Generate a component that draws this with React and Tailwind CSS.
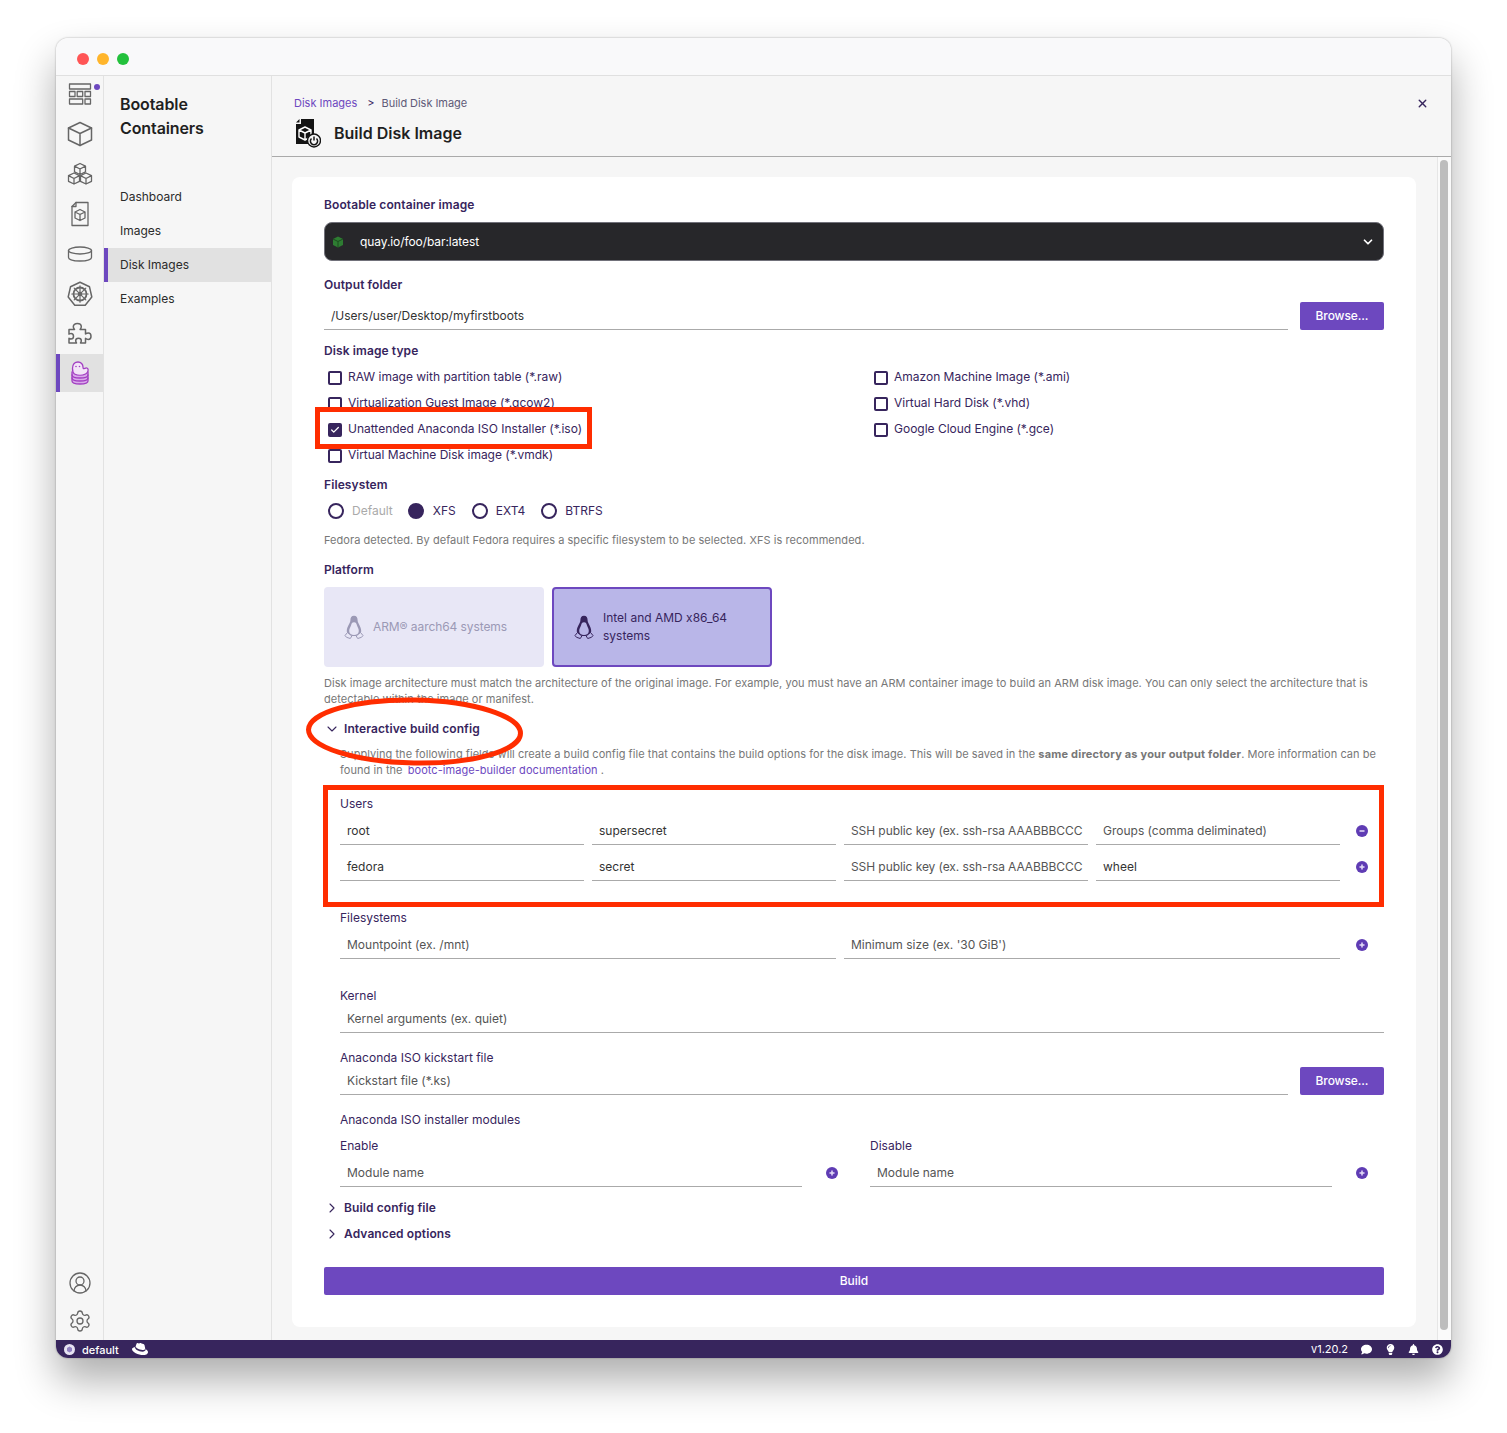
import { ChevronDown, ChevronRight, Settings, CircleUserRound, X, Check } from "lucide-react";
import { FaRedhat, FaComment, FaLightbulb, FaBell, FaQuestionCircle } from "react-icons/fa";

const NAV_STROKE = { fill: "none", stroke: "#666", strokeWidth: 1.3, strokeLinejoin: "round", strokeLinecap: "round" };

function DashboardIcon() {
  return (
    <svg width="24" height="24" viewBox="0 0 24 24" {...NAV_STROKE}>
      <rect x="1.5" y="1" width="21" height="5" />
      <rect x="1.5" y="8.5" width="5.5" height="5" />
      <rect x="9.2" y="8.5" width="5.5" height="5" />
      <rect x="17" y="8.5" width="5.5" height="5" />
      <rect x="1.5" y="16" width="13.2" height="5" />
      <rect x="17" y="16" width="5.5" height="5" />
    </svg>
  );
}

function CubeIcon() {
  return (
    <svg width="26" height="26" viewBox="0 0 26 26" {...NAV_STROKE} strokeWidth="1.5">
      <path d="M13 1.500 24.500 7v12L13 24.500 1.500 19V7z" />
      <path d="M1.500 7 13 12.500 24.500 7M13 12.500v12" />
    </svg>
  );
}

function CubesIcon() {
  const cube = "M0-5.500 5.500-2.800v5.600L0 5.500-5.500 2.800v-5.600zM-5.500-2.800 0 0 5.500-2.800M0 0v5.500";
  return (
    <svg width="26" height="24" viewBox="0 0 26 24" {...NAV_STROKE}>
      <path d={cube} transform="translate(13 7)" />
      <path d={cube} transform="translate(7 16.5)" />
      <path d={cube} transform="translate(19 16.5)" />
    </svg>
  );
}

function FileCubeIcon() {
  return (
    <svg width="20" height="26" viewBox="0 0 20 26" {...NAV_STROKE}>
      <path d="M6 1.500h12v23H2V5.500z" />
      <path d="M2 5.500h4v-4" />
      <path d="M10 8.500 15 11v6l-5 2.500L5 17v-6zM5 11l5 2.500 5-2.500M10 13.500v6" />
    </svg>
  );
}

function DiskIcon() {
  return (
    <svg width="26" height="16" viewBox="0 0 26 16" {...NAV_STROKE}>
      <ellipse cx="13" cy="4.500" rx="11.500" ry="3.500" />
      <path d="M1.500 4.500v7c0 2 5 3.500 11.500 3.500s11.500-1.500 11.500-3.500v-7" />
    </svg>
  );
}

function KubeIcon() {
  return (
    <svg width="26" height="26" viewBox="0 0 26 26" {...NAV_STROKE}>
      <path d="M13 1.200 22.500 5.800 24.800 16 18.200 24.200H7.800L1.200 16 3.500 5.800z" strokeWidth="1.500" />
      <circle cx="13" cy="13" r="6.500" strokeWidth="1.800" />
      <circle cx="13" cy="13" r="1.600" fill="#666" />
      <path d="M13 4.800v16.400M4.800 13h16.400M7.200 7.200l11.600 11.600M18.800 7.200 7.200 18.800" strokeWidth="1.200" />
    </svg>
  );
}

function PuzzleIcon() {
  return (
    <svg width="26" height="26" viewBox="0 0 26 26" {...NAV_STROKE} strokeWidth="1.500">
      <path d="M2 8.500h5.500c-.8-1-1.200-1.800-1.200-2.800 0-2 1.800-3.200 4-3.200s4 1.200 4 3.200c0 1-.4 1.800-1.200 2.800h5.400v4.500c1-.7 1.800-1 2.800-1 1.700 0 2.700 1.400 2.700 3.200s-1 3.200-2.700 3.200c-1 0-1.800-.3-2.800-1v4.600h-5c.5-1 .8-1.500.8-2.300 0-1.500-1.200-2.500-2.800-2.500s-2.800 1-2.800 2.500c0 .8.300 1.300.8 2.300H2v-4.700c1 .5 1.300.7 2 .7 1.500 0 2.500-1.200 2.500-2.800s-1-2.800-2.500-2.800c-.7 0-1 .2-2 .7z" />
    </svg>
  );
}

function BootcIcon() {
  return (
    <svg width="20" height="24" viewBox="0 0 20 24" fill="none" stroke="#a23fc2" strokeWidth="1.300" strokeLinejoin="round" strokeLinecap="round">
      <path d="M2 11v9c0 1.800 3.500 3 8 3s8-1.200 8-3v-9" fill="#d9a8ea" />
      <path d="M2 14c0 1.800 3.500 3 8 3s8-1.200 8-3M2 17c0 1.800 3.500 3 8 3s8-1.200 8-3" />
      <path d="M2.500 7.500C2.500 3 5 1 8 1s5 2.500 5 5c0 1.500.5 2 1.500 1.500S17 6 18 8c.5 1.500-.5 4-2.500 5-3 1.500-8 1.500-11 0-1.500-1-2-3-2-5.500z" fill="#f3e4f8" />
      <circle cx="6" cy="5.500" r=".8" fill="#a23fc2" stroke="none" />
      <circle cx="9.500" cy="5.500" r=".8" fill="#a23fc2" stroke="none" />
    </svg>
  );
}

function NavIcon({ children, dot, active, first }) {
  return (
    <div className={`relative flex items-center justify-center ${first ? "h-[38px]" : "h-10"} ${active ? "bg-[#e1e1e1] border-l-4 border-[#6d48bf] pr-1 !h-[38px]" : ""}`}>
      {children}
      {dot && <span className="absolute right-[3px] top-[8px] h-[6px] w-[6px] rounded-full bg-[#6d48bf]" />}
    </div>
  );
}

function Label({ children, className = "" }) {
  return <div className={`h-4 text-xs leading-4 font-semibold tracking-[0.1px] text-[#37255d] ${className}`}>{children}</div>;
}

function SubLabel({ children, className = "" }) {
  return <div className={`h-4 text-xs leading-4 text-[#37255d] ${className}`}>{children}</div>;
}

function Input({ value, placeholder, className = "" }) {
  return (
    <div className={`flex h-7 items-center border-b border-[#aaa] px-[7px] text-xs whitespace-nowrap overflow-hidden ${placeholder ? "text-[#555]" : "text-[#333]"} ${className}`}>
      {value || placeholder}
    </div>
  );
}

function Browse() {
  return (
    <button className="h-7 w-[84px] shrink-0 rounded-[2px] bg-[#6d48bf] text-xs font-medium tracking-[-0.1px] text-white">Browse...</button>
  );
}

function RoundButton({ minus }) {
  return (
    <svg width="12" height="12" viewBox="0 0 12 12">
      <circle cx="6" cy="6" r="6" fill="#5f3cb4" />
      <path d={minus ? "M3.500 6h5" : "M3.500 6h5M6 3.500v5"} stroke="#e6def8" strokeWidth="1.500" />
    </svg>
  );
}

function RowAction({ minus, className = "w-11" }) {
  return (
    <div className={`flex h-7 shrink-0 items-center justify-end pr-4 ${className}`}>
      <RoundButton minus={minus} />
    </div>
  );
}

function CheckRow({ label, checked }) {
  return (
    <div className="flex h-[26px] items-center gap-[6px] pl-1 text-xs tracking-[-0.01px] text-[#37255d]">
      <span className={`flex h-[14px] w-[14px] shrink-0 translate-y-px items-center justify-center rounded-[2px] border-2 border-[#37255d] ${checked ? "bg-[#37255d]" : "bg-white"}`}>
        {checked && <Check size={10} strokeWidth={3} className="text-white" />}
      </span>
      {label}
    </div>
  );
}

function Radio({ label, checked, muted, className = "gap-2" }) {
  return (
    <div className={`flex items-center text-xs ${muted ? "text-[#aaa]" : "text-[#37255d]"} ${className}`}>
      <span className={`h-4 w-4 rounded-full border-2 border-[#37255d] ${checked ? "bg-[#37255d]" : "bg-white"}`} />
      {label}
    </div>
  );
}

function Penguin({ color, bg }) {
  return (
    <svg width="20" height="24" viewBox="0 0 20 24" strokeLinejoin="round">
      <path d="M10 .8c-2.600 0-3.600 2-3.600 4.500 0 3-3.600 6.200-3.600 10.700 0 3 2.700 5 7.200 5s7.200-2 7.200-5c0-4.500-3.600-7.700-3.600-10.700C13.600 2.800 12.600.8 10 .8z" fill={color} />
      <path d="M10 7.200c-2 0-2.300 1.200-3 3.200-.8 2-1.800 3.500-1.800 5.600 0 2.500 2 4 4.800 4s4.800-1.500 4.800-4c0-2.100-1-3.600-1.800-5.600-.7-2-1-3.200-3-3.200z" fill={bg} />
      <path d="M3.500 17.500 1 20.500l1.500 1.800 3.800 1.200 1.500-2.500zM16.500 17.500l2.500 3-1.500 1.800-3.800 1.200-1.500-2.500z" fill={bg} stroke={color} strokeWidth="1" />
    </svg>
  );
}

function PlatformCard({ label, selected }) {
  return (
    <div className={`flex h-20 w-[220px] items-center gap-[8px] rounded-[4px] px-[20px] text-xs leading-[18px] ${selected ? "border-2 border-[#6d48bf] bg-[#b9b6e8] text-[#37255d]" : "bg-[#e8e7f6] tracking-[-0.08px] text-[#9b99b5]"}`}>
      <div className="shrink-0">
        <Penguin color={selected ? "#37255d" : "#9b99b5"} bg={selected ? "#b9b6e8" : "#e8e7f6"} />
      </div>
      <div className="pl-px">{label}</div>
    </div>
  );
}

function Section({ label, open }) {
  return (
    <div className="flex h-4 items-center gap-1 text-xs font-semibold tracking-[0.1px] text-[#37255d]">
      {open ? <ChevronDown size={16} strokeWidth={1.6} /> : <ChevronRight size={16} strokeWidth={1.6} />}
      {label}
    </div>
  );
}

const HELP = "text-[11px] leading-4 tracking-[0.05px] text-[#777]";

const checksLeft = [
  "RAW image with partition table (*.raw)",
  "Virtualization Guest Image (*.qcow2)",
  "Unattended Anaconda ISO Installer (*.iso)",
  "Virtual Machine Disk image (*.vmdk)"
];
const checksRight = ["Amazon Machine Image (*.ami)", "Virtual Hard Disk (*.vhd)", "Google Cloud Engine (*.gce)"];

export default function App() {
  return (
    <div className="relative h-[1433px] w-[1507px] overflow-hidden bg-white pl-[56px] pt-[38px] font-['Inter',sans-serif]">
      <div className="flex h-[1320px] w-[1395px] flex-col overflow-hidden rounded-xl bg-[#f6f6f6] shadow-[0_0_2px_rgba(0,0,0,0.35),0_22px_40px_rgba(0,0,0,0.32)]">
        {/* title bar */}
        <div className="flex h-[38px] shrink-0 items-center gap-2 border-b border-[#e0e0e0] bg-[#f9f9fa] pl-[21px] pt-1">
          <span className="h-3 w-3 rounded-full bg-[#ff5555]" />
          <span className="h-3 w-3 rounded-full bg-[#ffb52b]" />
          <span className="h-3 w-3 rounded-full bg-[#23c13c]" />
        </div>

        <div className="flex min-h-0 flex-1">
          {/* icon rail */}
          <div className="flex w-[48px] shrink-0 flex-col border-r border-[#e2e2e2] bg-[#f6f6f6]">
            <NavIcon dot first><DashboardIcon /></NavIcon>
            <NavIcon><CubeIcon /></NavIcon>
            <NavIcon><CubesIcon /></NavIcon>
            <NavIcon><FileCubeIcon /></NavIcon>
            <NavIcon><DiskIcon /></NavIcon>
            <NavIcon><KubeIcon /></NavIcon>
            <NavIcon><PuzzleIcon /></NavIcon>
            <NavIcon active><BootcIcon /></NavIcon>
            <div className="mt-auto flex flex-col items-center gap-[14px] pb-[7px] text-[#666]">
              <CircleUserRound size={24} strokeWidth={1.3} />
              <Settings size={24} strokeWidth={1.3} />
            </div>
          </div>

          {/* section nav */}
          <div className="w-[168px] shrink-0 border-r border-[#e2e2e2] bg-[#f6f6f6]">
            <div className="pl-4 pt-4 text-base leading-6 font-semibold tracking-[-0.1px] text-[#1f1f1f]">Bootable<br />Containers</div>
            <div className="mt-10 text-xs text-[#2b2b2b]">
              <div className="flex h-[34px] items-center pl-4">Dashboard</div>
              <div className="flex h-[34px] items-center pl-4">Images</div>
              <div className="flex h-[34px] items-center border-l-4 border-[#6d48bf] bg-[#e1e1e1] pl-3">Disk Images</div>
              <div className="flex h-[34px] items-center pl-4">Examples</div>
            </div>
          </div>

          {/* main */}
          <div className="flex min-w-0 flex-1 flex-col">
            <div className="relative h-[81px] shrink-0 border-b border-[#aaa] pl-[22px]">
              <div className="flex items-center pt-[20px] text-[11px] leading-[14px]">
                <span className="text-[#6d48bf]">Disk Images</span>
                <span className="ml-[10px] text-[#37255d]">&gt;</span>
                <span className="ml-[7px] tracking-[-0.05px] text-[#5e5a78]">Build Disk Image</span>
              </div>
              <div className="mt-2 flex items-center gap-[13px] pl-px">
                <svg width="26" height="30" viewBox="0 0 26 30">
                  <path d="M6 1h13v25H1V6h5z" fill="#141414" />
                  <path d="M1 4.500 4.500 1v3.500z" fill="#141414" />
                  <path d="M10 9 16 12v7l-6 3-6-3v-7zM4 12l6 3 6-3M10 15v7" fill="none" stroke="#fff" strokeWidth="1.400" strokeLinejoin="round" />
                  <circle cx="19" cy="22.500" r="6.500" fill="#f6f6f6" stroke="#141414" strokeWidth="1.400" />
                  <path d="M19 18.500v4M16.500 20.500a3.600 3.600 0 1 0 5 0" fill="none" stroke="#141414" strokeWidth="1.500" />
                </svg>
                <span className="text-base leading-6 font-semibold text-[#1f1f1f]">Build Disk Image</span>
              </div>
              <X size={13} strokeWidth={2.5} className="absolute right-[22px] top-[21px] text-[#37255d]" />
            </div>

            <div className="flex min-h-0 flex-1">
              <div className="min-w-0 flex-1 pl-5 pr-[21px] pt-5">
                {/* form card */}
                <div className="h-[1150px] rounded-lg bg-white px-8 pt-5">
                  <Label>Bootable container image</Label>
                  <div className="mt-[9px] flex h-[39px] items-center rounded-lg border border-[#71717a] bg-[#27272a] pl-[7px] pr-2 text-xs tracking-[-0.08px] text-white">
                    <svg width="12" height="12" viewBox="0 0 12 12" className="shrink-0">
                      <path d="M6 .5 11 3v6L6 11.500 1 9V3z" fill="#2e7d32" />
                      <path d="M1 3l5 2.500L11 3M6 5.500v6" fill="none" stroke="#1c4d1f" strokeWidth="1" />
                    </svg>
                    <span className="ml-4">quay.io/foo/bar:latest</span>
                    <ChevronDown size={14} strokeWidth={3} className="ml-auto" />
                  </div>

                  <Label className="mt-4">Output folder</Label>
                  <div className="mt-[9px] flex gap-3">
                    <Input value="/Users/user/Desktop/myfirstboots" className="flex-1" />
                    <Browse />
                  </div>

                  <Label className="mt-[13px]">Disk image type</Label>
                  <div className="mt-[5px] flex">
                    <div className="w-[546px]">
                      {checksLeft.map((c, i) => (
                        <CheckRow key={c} label={c} checked={i === 2} />
                      ))}
                    </div>
                    <div>
                      {checksRight.map((c) => (
                        <CheckRow key={c} label={c} />
                      ))}
                    </div>
                  </div>

                  <Label className="mt-[9px]">Filesystem</Label>
                  <div className="mt-[5px] flex h-[26px] items-center gap-4 pl-1">
                    <Radio label="Default" muted />
                    <Radio label="XFS" checked className="-ml-px gap-[9px]" />
                    <Radio label="EXT4" />
                    <Radio label="BTRFS" />
                  </div>
                  <div className={`mt-2 ${HELP}`}>
                    Fedora detected. By default Fedora requires a specific filesystem to be selected. XFS is recommended.
                  </div>

                  <Label className="mt-[14px]">Platform</Label>
                  <div className="mt-[9px] flex gap-2">
                    <PlatformCard label="ARM® aarch64 systems" />
                    <PlatformCard label={<>Intel and AMD x86_64<br />systems</>} selected />
                  </div>
                  <div className={`mt-2 ${HELP}`}>
                    Disk image architecture must match the architecture of the original image. For example, you must have an ARM container image to build an ARM disk image. You can only select the architecture that is detectable within the image or manifest.
                  </div>

                  <div className="mt-[14px]"><Section label="Interactive build config" open /></div>

                  <div className="pl-4">
                    <div className={`mt-[9px] ${HELP}`}>
                      Supplying the following fields will create a build config file that contains the build options for the disk image. This will be saved in the <span className="font-bold tracking-[0.2px]">same directory as your output folder</span>. More information can be found in the <span className="ml-[2px] text-[#6d48bf]">bootc-image-builder documentation</span> .
                    </div>

                    <SubLabel className="mt-[18px]">Users</SubLabel>
                    <div className="mt-[5px] flex flex-col gap-2">
                      <div className="flex gap-2">
                        <Input value="root" className="w-[244px]" />
                        <Input value="supersecret" className="w-[244px]" />
                        <Input placeholder="SSH public key (ex. ssh-rsa AAABBBCCC" className="w-[244px] tracking-[-0.08px]" />
                        <Input placeholder="Groups (comma deliminated)" className="w-[244px]" />
                        <RowAction minus className="-ml-2 w-[44px]" />
                      </div>
                      <div className="flex gap-2">
                        <Input value="fedora" className="w-[244px]" />
                        <Input value="secret" className="w-[244px]" />
                        <Input placeholder="SSH public key (ex. ssh-rsa AAABBBCCC" className="w-[244px] tracking-[-0.08px]" />
                        <Input value="wheel" className="w-[244px]" />
                        <RowAction className="-ml-2 w-[44px]" />
                      </div>
                    </div>

                    <SubLabel className="mt-[29px]">Filesystems</SubLabel>
                    <div className="mt-[5px] flex gap-2">
                      <Input placeholder="Mountpoint (ex. /mnt)" className="w-[496px]" />
                      <Input placeholder="Minimum size (ex. '30 GiB')" className="w-[496px]" />
                      <RowAction className="-ml-2 w-[44px]" />
                    </div>

                    <SubLabel className="mt-[29px]">Kernel</SubLabel>
                    <Input placeholder="Kernel arguments (ex. quiet)" className="mt-px" />

                    <SubLabel className="mt-[17px]">Anaconda ISO kickstart file</SubLabel>
                    <div className="mt-px flex gap-3">
                      <Input placeholder="Kickstart file (*.ks)" className="flex-1" />
                      <Browse />
                    </div>

                    <SubLabel className="mt-[17px]">Anaconda ISO installer modules</SubLabel>
                    <div className="mt-[10px] grid grid-cols-2 gap-4">
                      <div>
                        <SubLabel>Enable</SubLabel>
                        <div className="mt-[5px] flex">
                          <Input placeholder="Module name" className="flex-1" />
                          <RowAction className="w-[52px]" />
                        </div>
                      </div>
                      <div>
                        <SubLabel>Disable</SubLabel>
                        <div className="mt-[5px] flex">
                          <Input placeholder="Module name" className="flex-1" />
                          <RowAction className="w-[52px]" />
                        </div>
                      </div>
                    </div>
                  </div>

                  <div className="mt-[13px]"><Section label="Build config file" /></div>
                  <div className="mt-[10px]"><Section label="Advanced options" /></div>

                  <button className="mt-[25px] h-7 w-full rounded-[2px] bg-[#6d48bf] text-xs font-medium text-white">Build</button>
                </div>
              </div>

              {/* scrollbar */}
              <div className="w-[14px] shrink-0 border-l border-[#e6e6e6] bg-[#fafafa] pl-[2px] pt-[3px]">
                <div className="h-[1170px] w-2 rounded-full bg-[#bdbdbd]" />
              </div>
            </div>
          </div>
        </div>

        {/* status bar */}
        <div className="flex h-[18px] shrink-0 items-center bg-[#37255d] text-[11px] text-white">
          <svg width="11" height="11" viewBox="0 0 11 11" className="ml-2">
            <circle cx="5.500" cy="5.500" r="5.500" fill="#e6e2f2" />
            <path d="M5.500 2.500 8 4v3L5.500 8.500 3 7V4z" fill="#8f7fc0" />
          </svg>
          <span className="ml-[7px] translate-y-px font-medium">default</span>
          <FaRedhat size={16} className="ml-[13px]" />
          <span className="ml-auto tracking-[-0.02px]">v1.20.2</span>
          <FaComment size={11} className="ml-[13px]" />
          <FaLightbulb size={11} className="ml-[13px]" />
          <FaBell size={11} className="ml-3" />
          <FaQuestionCircle size={11} className="ml-[13px] mr-2" />
        </div>
      </div>

      {/* reviewer annotations drawn on top of the screenshot */}
      <div className="absolute left-[315px] top-[407px] h-[42px] w-[277px] border-[5px] border-[#ff2d00]" />
      <div className="absolute left-[323px] top-[785px] h-[122px] w-[1061px] border-[5px] border-[#ff2d00]" />
      <svg className="absolute left-[304px] top-[695px]" width="222" height="72" viewBox="0 0 222 72" fill="none">
        <ellipse cx="110.500" cy="36.500" rx="106" ry="31.500" stroke="#ff2d00" strokeWidth="5" transform="rotate(1 110.500 36.500)" />
      </svg>
    </div>
  );
}
